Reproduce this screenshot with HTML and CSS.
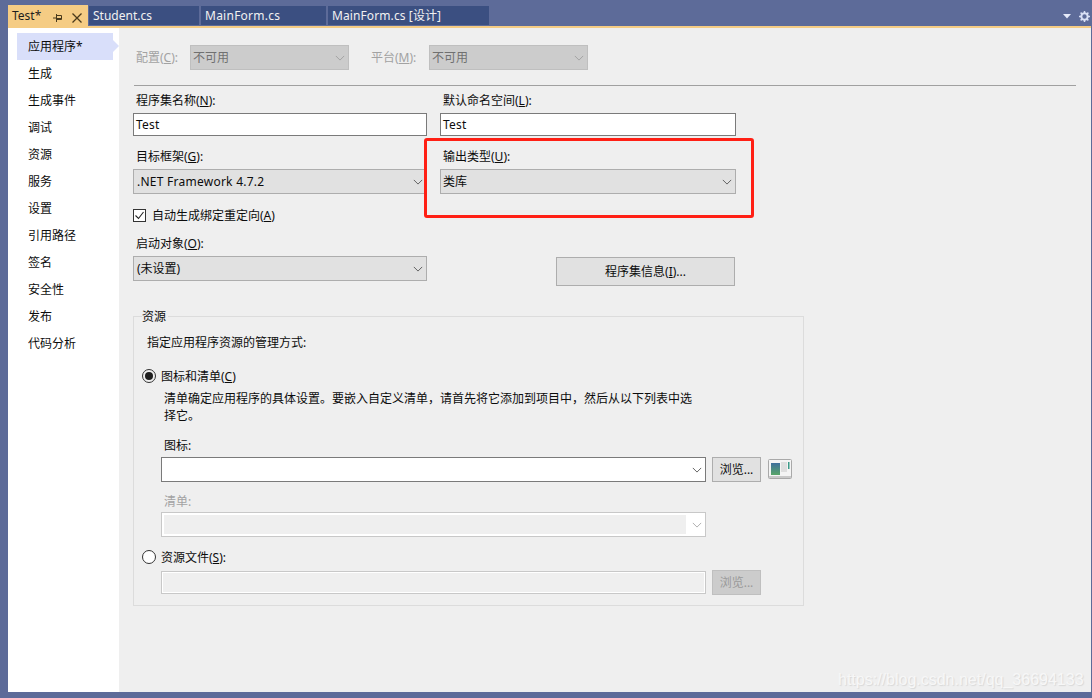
FILE: index.html
```html
<!DOCTYPE html>
<html lang="zh-CN">
<head>
<meta charset="utf-8">
<title>Test</title>
<link rel="stylesheet" href="styles.css">
</head>
<body>
<svg class="defs" width="0" height="0"><symbol id="chev" viewBox="0 0 12 7"><path d="M1 1l5 5 5-5" fill="none" stroke="currentColor" stroke-width="1.1"/></symbol></svg>
<header class="tabbar">
  <div class="tab tab-active"><span class="tab-name">Test*</span>
    <svg class="pin" width="9" height="8" viewBox="0 0 9 8"><path d="M0 4h3M3.500 0v8M3.500 1.500h5v4h-5M3.500 4.500h5" fill="none" stroke="#4a3a1c" stroke-width="1"/></svg>
    <svg class="close" width="10" height="10" viewBox="0 0 10 10"><path d="M.5.500l9 9M9.500.500l-9 9" fill="none" stroke="#4a3a1c" stroke-width="1.300"/></svg>
  </div>
  <div class="tab tab-student">Student.cs</div>
  <div class="tab tab-main latin">MainForm.cs</div>
  <div class="tab tab-design">MainForm.cs [设计]</div>
  <div class="tab-tools">
    <svg width="8" height="5" viewBox="0 0 8 5"><path d="M0 0h8L4 4.500z" fill="#e6ebfa"/></svg>
    <svg class="gear" width="11" height="11" viewBox="0 0 11 11"><circle cx="5.500" cy="5.500" r="3.200" fill="none" stroke="#d9e0f5" stroke-width="2"/><path d="M5.500 0v11M0 5.500h11M1.600 1.600l7.800 7.800M9.400 1.600l-7.800 7.800" stroke="#d9e0f5" stroke-width="1.500" stroke-dasharray="2 7 2"/></svg>
  </div>
</header>
<div class="frame">
  <nav class="sidebar">
    <div class="nav-item nav-active">应用程序*</div>
    <div class="nav-item">生成</div>
    <div class="nav-item">生成事件</div>
    <div class="nav-item">调试</div>
    <div class="nav-item">资源</div>
    <div class="nav-item">服务</div>
    <div class="nav-item">设置</div>
    <div class="nav-item">引用路径</div>
    <div class="nav-item">签名</div>
    <div class="nav-item">安全性</div>
    <div class="nav-item">发布</div>
    <div class="nav-item">代码分析</div>
  </nav>
  <main class="content">
    <div class="config-row">
      <span class="muted config-label">配置(<u>C</u>):</span>
      <div class="select select-off select-cjk config-select">不可用<svg class="chev"><use href="#chev"/></svg></div>
      <span class="muted platform-label">平台(<u>M</u>):</span>
      <div class="select select-off select-cjk config-select">不可用<svg class="chev"><use href="#chev"/></svg></div>
    </div>
    <div class="rule"></div>
    <div class="form-grid">
      <div class="field">
        <label class="field-label">程序集名称(<u>N</u>):</label>
        <div class="input latin">Test</div>
      </div>
      <div class="field">
        <label class="field-label">默认命名空间(<u>L</u>):</label>
        <div class="input latin">Test</div>
      </div>
      <div class="field">
        <label class="field-label">目标框架(<u>G</u>):</label>
        <div class="select latin">.NET Framework 4.7.2<svg class="chev"><use href="#chev"/></svg></div>
      </div>
      <div class="field">
        <label class="field-label">输出类型(<u>U</u>):</label>
        <div class="select select-cjk">类库<svg class="chev"><use href="#chev"/></svg></div>
      </div>
      <div class="check-row">
        <svg class="checkbox" width="13" height="13" viewBox="0 0 13 13"><rect x=".5" y=".5" width="12" height="12" fill="#fff" stroke="#333"/><path d="M2.500 6.500l3 3 5-6.500" fill="none" stroke="#222" stroke-width="1.100"/></svg>
        <span>自动生成绑定重定向(<u>A</u>)</span>
      </div>
      <div class="field field-start">
        <label class="field-label">启动对象(<u>O</u>):</label>
        <div class="select">(未设置)<svg class="chev"><use href="#chev"/></svg></div>
      </div>
      <div class="button assembly-btn">程序集信息(<u>I</u>)...</div>
    </div>
    <fieldset class="group">
      <legend class="group-title">资源</legend>
      <p class="group-intro">指定应用程序资源的管理方式:</p>
      <div class="radio-row radio-first">
        <span class="radio radio-on"></span>
        <span>图标和清单(<u>C</u>)</span>
      </div>
      <p class="desc">清单确定应用程序的具体设置。要嵌入自定义清单，请首先将它添加到项目中，然后从以下列表中选择它。</p>
      <div class="sub-label icon-label">图标:</div>
      <div class="file-row">
        <div class="input combo"><svg class="chev"><use href="#chev"/></svg></div>
        <div class="button browse">浏览...</div>
        <svg class="app-icon" width="24" height="20" viewBox="0 0 24 20">
          <defs><linearGradient id="pic" x1="0" y1="0" x2="0" y2="1"><stop offset="0" stop-color="#3f6f9c"/><stop offset="1" stop-color="#58a668"/></linearGradient></defs>
          <rect x=".5" y=".5" width="23" height="19" rx="1" fill="#f4f4f4" stroke="#a9a9a9"/>
          <rect x="1" y="17" width="22" height="2" fill="#c9c9c9"/>
          <rect x="3" y="4" width="9" height="12" fill="url(#pic)"/>
          <rect x="13" y="3" width="6" height="10" fill="#dedede"/>
          <rect x="20" y="3" width="1.500" height="7" fill="#3c9a88"/>
        </svg>
      </div>
      <div class="sub-label muted manifest-label">清单:</div>
      <div class="input combo combo-off"><div class="combo-fill"></div><svg class="chev"><use href="#chev"/></svg></div>
      <div class="radio-row radio-second">
        <span class="radio"></span>
        <span>资源文件(<u>S</u>):</span>
      </div>
      <div class="file-row file-row-res">
        <div class="input combo input-off"></div>
        <div class="button browse button-off">浏览...</div>
      </div>
    </fieldset>
  </main>
</div>
<div class="callout"></div>
<div class="watermark">https://blog.csdn.net/qq_36694133</div>
</body>
</html>
```
FILE: styles.css
```css
* { box-sizing: border-box; }
html, body { height: 100%; }
body {
  margin: 0;
  width: 1092px;
  height: 698px;
  overflow: hidden;
  position: relative;
  background: #5d6b99;
  color: #0c0c0c;
  font: 12px/17px "Noto Sans", "Noto Sans CJK SC", sans-serif;
  padding: 5px 1px 6px 8px;
  display: flex;
  flex-direction: column;
}
.defs { position: absolute; }
u { text-underline-offset: 1px; }
.latin { letter-spacing: .25px; }

/* tab strip */
.tabbar {
  flex: none;
  display: flex;
  align-items: flex-start;
  border-bottom: 2px solid #f5cc84;
  box-sizing: content-box;
  height: 21px;
}
.tab {
  height: 19px;
  margin-top: 1px;
  background: #3b4f81;
  color: #f1f1f1;
  line-height: 19px;
  padding-left: 4px;
  margin-right: 2px;
  white-space: nowrap;
}
.tab-active {
  width: 80px;
  height: 21px;
  margin-top: 0;
  margin-right: 1px;
  background: #f5cc84;
  color: #1e1e1e;
  display: flex;
  align-items: center;
}
.tab-name { width: 41px; }
.pin { margin-top: 4px; }
.close { margin: 4px 0 0 10px; }
.tab-student { width: 110px; }
.tab-main { width: 125px; }
.tab-design { width: 161px; margin-right: 0; letter-spacing: .1px; }
.tab-tools {
  margin-left: auto;
  height: 21px;
  display: flex;
  align-items: center;
  padding: 2px 1px 0 0;
  gap: 8px;
}

/* main frame */
.frame { flex: 1; display: flex; min-height: 0; }
.sidebar {
  width: 111px;
  flex: none;
  background: #fff;
  padding: 5px 6px 0 9px;
}
.nav-item {
  height: 27px;
  line-height: 28px;
  padding-left: 11px;
  position: relative;
}
.nav-active { background: #d9dffa; }
.nav-active::after {
  content: "";
  position: absolute;
  left: 100%;
  top: 7px;
  border-left: 6px solid #d9dffa;
  border-top: 6px solid transparent;
  border-bottom: 6px solid transparent;
}
.content {
  flex: 1;
  background: #efefef;
  padding: 17px 15px 0 14px;
}

/* top rows */
.config-row { display: flex; align-items: center; height: 25px; padding-left: 3px; }
.muted { color: #a2a2a2; }
.config-label { width: 54px; }
.platform-label { margin-left: 22px; width: 58px; }
.config-select { width: 159px; }
.rule { height: 1px; margin-top: 15px; background: #a0a0a0; margin-left: 1px; }

.form-grid {
  display: grid;
  grid-template-columns: 294px 296px;
  column-gap: 13px;
  margin-top: 7px;
}
.field-label { display: block; height: 20px; line-height: 16px; padding-left: 3px; }
.field { margin-bottom: 13px; }
.input {
  height: 23px;
  background: #fff;
  border: 1px solid #7a7a7a;
  line-height: 21px;
  padding-left: 2px;
}
.select {
  height: 25px;
  background: #e1e1e1;
  border: 1px solid #adadad;
  line-height: 23px;
  padding-left: 3px;
  position: relative;
}
.select-cjk { padding-left: 2px; }
.select-off { background: #ccc; border-color: #bfbfbf; color: #707070; }
.chev {
  position: absolute;
  right: 3px;
  top: 9px;
  width: 10px;
  height: 6px;
  color: #555;
}
.select-off .chev { color: #a0a0a0; }

.check-row {
  grid-column: 1 / -1;
  display: flex;
  align-items: center;
  gap: 6px;
  height: 18px;
  margin-top: -1px;
  margin-bottom: 12px;
}
.field-start { margin-bottom: 0; }
.button {
  background: #e1e1e1;
  border: 1px solid #adadad;
  text-align: center;
}
.assembly-btn {
  height: 29px;
  line-height: 27px;
  width: 179px;
  margin-left: 116px;
  margin-top: 21px;
}

/* resources group */
.group {
  margin: 21px 0 0;
  width: 671px;
  height: 299px;
  padding: 0 0 0 8px;
  border: 1px solid #dcdcdc;
  min-inline-size: 0;
}
.group-title { padding: 2px 2px 0 0; margin-left: 0; line-height: 16px; }
.group-intro { margin: 9px 0 0 5px; line-height: 17px; }
.radio-row { display: flex; align-items: center; gap: 5px; height: 18px; }
.radio-first { margin-top: 16px; }
.radio {
  width: 14px;
  height: 14px;
  border: 1px solid #333;
  border-radius: 50%;
  background: #fff;
  flex: none;
  position: relative;
}
.radio-on { background: transparent; display: flex; align-items: center; justify-content: center; }
.radio-on::after {
  content: "";
  width: 8px;
  height: 8px;
  border-radius: 50%;
  background: #1e1e1e;
}
.desc { margin: 5px 0 0 22px; width: 534px; line-height: 17px; }
.sub-label { padding-left: 22px; line-height: 17px; }
.icon-label { margin-top: 13px; }
.file-row { display: flex; align-items: flex-start; margin: 3px 0 0 19px; }
.combo {
  width: 545px;
  height: 25px;
  position: relative;
  flex: none;
}
.browse { width: 49px; height: 25px; line-height: 23px; margin-left: 6px; flex: none; }
.app-icon { margin: 2px 0 0 7px; flex: none; }
.manifest-label { margin-top: 11px; }
.combo-off { margin: 2px 0 0 19px; border-color: #c8c8c8; padding: 2px 0 0 2px; }
.combo-fill { width: 522px; height: 19px; background: #efefef; }
.combo-off .chev { color: #a8a8a8; }
.radio-second { margin-top: 11px; }
.file-row-res { margin-top: 4px; align-items: center; }
.input-off { height: 23px; background: #efefef; border-color: #c8c8c8; box-shadow: inset 0 0 0 1px #fff; }
.button-off { background: #ccc; border-color: #bfbfbf; color: #9a9a9a; }

/* overlays */
.callout {
  position: absolute;
  left: 424px;
  top: 138px;
  width: 330px;
  height: 80px;
  border: 3px solid #ff1f14;
  border-radius: 3px;
}
.watermark {
  position: absolute;
  left: 838px;
  top: 669px;
  font: 16px/22px "Liberation Sans", sans-serif;
  color: #f7f7f7;
  text-shadow: 1px 1px 1px #d8d8d8;
  white-space: nowrap;
}
```
